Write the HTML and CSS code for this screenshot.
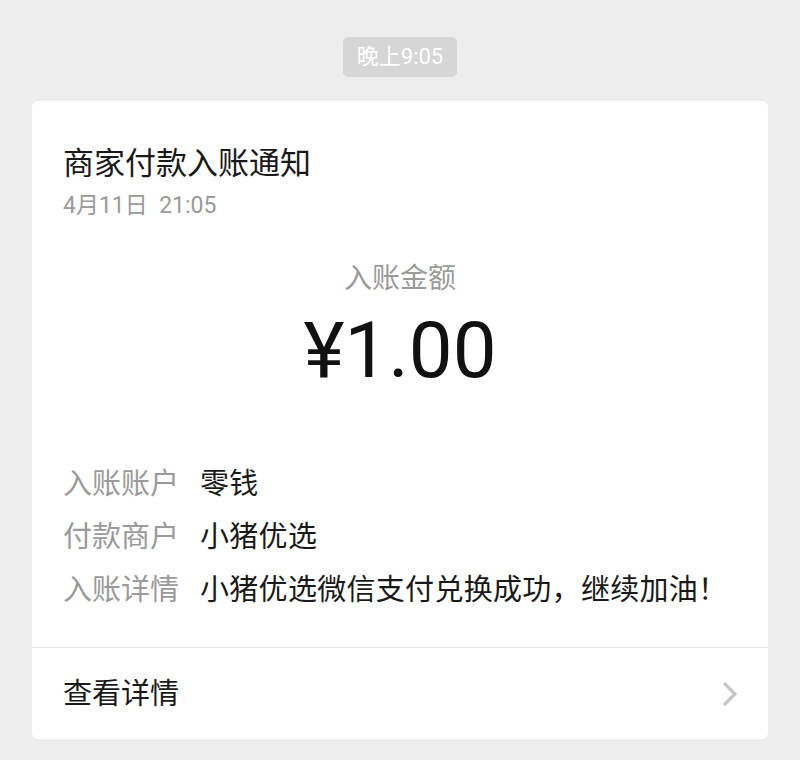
FILE: index.html
```html
<!DOCTYPE html>
<html lang="zh-CN">
<head>
<meta charset="utf-8">
<title>商家付款入账通知</title>
<link rel="stylesheet" href="styles.css">
</head>
<body>
<div class="page">
  <div class="time-row"><span class="time-pill">晚上9:05</span></div>
  <div class="card">
    <div class="card-body">
      <div class="title">商家付款入账通知</div>
      <div class="date">4月11日&nbsp;&nbsp;21:05</div>
      <div class="amount-label">入账金额</div>
      <div class="amount">¥1.00</div>
      <div class="rows">
        <div class="row"><span class="label">入账账户</span><span class="value">零钱</span></div>
        <div class="row"><span class="label">付款商户</span><span class="value">小猪优选</span></div>
        <div class="row"><span class="label">入账详情</span><span class="value">小猪优选微信支付兑换成功，继续加油！</span></div>
      </div>
    </div>
    <div class="card-footer">
      <span class="footer-text">查看详情</span>
      <svg class="chevron" width="18" height="26" viewBox="0 0 18 26"><path d="M3 2 L14 13 L3 24" fill="none" stroke="#c7c7c7" stroke-width="3.2" stroke-linecap="butt" stroke-linejoin="miter"/></svg>
    </div>
  </div>
</div>
</body>
</html>
```
FILE: styles.css
```css
html, body {
  margin: 0;
  padding: 0;
  background: #ededed;
}
body {
  font-family: Roboto, "Noto Sans CJK SC", sans-serif;
  width: 800px;
  height: 760px;
  overflow: hidden;
}
.page {
  padding-top: 37px;
}
.time-row {
  display: flex;
  justify-content: center;
}
.time-pill {
  display: block;
  height: 40px;
  line-height: 40px;
  padding: 0 14px;
  font-size: 22px;
  color: #ffffff;
  background: #d6d6d6;
  border-radius: 5px;
}
.card {
  margin: 24px 32px 0 32px;
  background: #ffffff;
  border-radius: 6px;
  overflow: hidden;
}
.card-body {
  padding: 43px 31px 30px 31px;
  border-bottom: 1px solid #e3e3e3;
}
.title {
  font-size: 31px;
  line-height: 40px;
  color: #191919;
}
.date {
  margin-top: 7px;
  font-size: 23px;
  line-height: 30px;
  color: #9a9a9a;
}
.amount-label {
  margin-top: 38px;
  text-align: center;
  font-size: 28px;
  line-height: 40px;
  color: #9a9a9a;
}
.amount {
  margin-top: 7px;
  text-align: center;
  font-size: 78px;
  line-height: 90px;
  color: #111111;
}
.rows {
  margin-top: 62px;
}
.row {
  display: flex;
  font-size: 29px;
  line-height: 53px;
}
.label {
  width: 137px;
  flex: none;
  color: #9a9a9a;
}
.value {
  color: #191919;
  letter-spacing: 0.3px;
}
.card-footer {
  height: 91px;
  padding: 0 29px 0 31px;
  display: flex;
  align-items: center;
  justify-content: space-between;
}
.footer-text {
  font-size: 29px;
  line-height: 40px;
  color: #191919;
}
.chevron {
  display: block;
}
```
